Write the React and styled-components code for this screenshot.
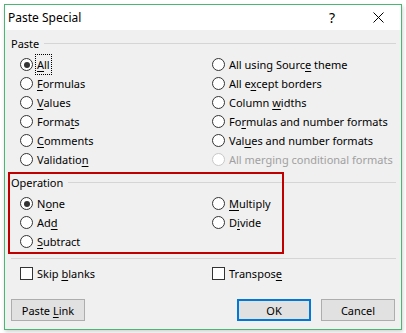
import React from 'react'
import styled, { createGlobalStyle } from 'styled-components'

const GlobalStyle = createGlobalStyle`
    html, body { margin: 0; padding: 0; background: #fff; }
    body {
        font-family: "Noto Sans", "DejaVu Sans", sans-serif;
        font-size: 11px;
        color: #000;
    }
`

// WINDOW
const Page = styled.div`
    padding: 4px;
`
const Window = styled.div`
    position: relative;
    box-sizing: border-box;
    width: 398px;
    height: 326px;
    border: 1px solid #4cb475;
    background: #f0f0f0;
    box-shadow: 1px 2px 4px rgba(0, 0, 0, .18);
    display: flex;
    flex-direction: column;
`
const TitleBar = styled.div`
    height: 25px;
    background: #fff;
    display: flex;
    align-items: center;
    padding-left: 3px;
`
const Title = styled.div`
    flex: 1;
    font-size: 12px;
`
const TitleButton = styled.div`
    width: 46px;
    height: 25px;
    display: flex;
    align-items: center;
    justify-content: center;
    font-size: 14px;
`
const Content = styled.div`
    flex: 1;
    display: flex;
    flex-direction: column;
    padding: 6px 5px 8px 6px;
`

// GROUPS
const GroupHeader = styled.div`
    height: 15px;
    display: flex;
    align-items: center;
    gap: 5px;
    margin-top: ${p => p.$top || 0}px;

    &::after {
        content: '';
        flex: 1;
        height: 1px;
        background: #d5d5d5;
    }
`
const OptionGrid = styled.div`
    display: grid;
    grid-template-columns: 192px 1fr;
    grid-auto-flow: column;
    grid-template-rows: repeat(${p => p.$rows}, 19px);
    padding-left: 9px;
    margin-top: 4px;
`
const Separator = styled.div`
    height: 1px;
    background: #d5d5d5;
    margin-top: 7px;
`
const CheckRow = styled.div`
    display: grid;
    grid-template-columns: 192px 1fr;
    height: 19px;
    padding-left: 9px;
    margin-top: 5px;
`
const Option = styled.label`
    display: flex;
    align-items: center;
    gap: 4px;
    white-space: nowrap;
    color: ${p => p.$disabled ? '#a0a0a0' : '#000'};
`
const Radio = styled.span`
    box-sizing: border-box;
    flex: none;
    width: 13px;
    height: 13px;
    border-radius: 50%;
    border: 1px solid ${p => p.$disabled ? '#c8c8c8' : '#333'};
    background: #fff;
    display: flex;
    align-items: center;
    justify-content: center;

    &::after {
        content: '';
        display: ${p => p.$checked ? 'block' : 'none'};
        width: 6px;
        height: 6px;
        border-radius: 50%;
        background: #333;
    }
`
const Box = styled.span`
    box-sizing: border-box;
    flex: none;
    width: 13px;
    height: 13px;
    border: 1px solid #333;
    background: #fff;
`
const Text = styled.span`
    outline: ${p => p.$focus ? '1px dotted #000' : 'none'};
    padding: ${p => p.$focus ? '2px 1px' : '0'};
    margin-left: ${p => p.$focus ? '-1px' : '0'};
`
const Key = styled.u`
    text-underline-offset: 2px;
`

// BUTTONS
const ButtonRow = styled.div`
    margin-top: auto;
    display: flex;
    gap: 10px;
    padding-right: 1px;
`
const Button = styled.div`
    box-sizing: border-box;
    width: 74px;
    height: 22px;
    display: flex;
    align-items: center;
    justify-content: center;
    background: #e1e1e1;
    border: ${p => p.$default ? '2px solid #0078d7' : '1px solid #adadad'};
    margin-left: ${p => p.$push ? 'auto' : '0'};
`

// ANNOTATION
const Highlight = styled.div`
    position: absolute;
    left: 3px;
    top: 167px;
    width: 276px;
    height: 82px;
    box-sizing: border-box;
    border: 2px solid #c00000;
    pointer-events: none;
`

const L = ({ text, k, focus }) => (
    <Text $focus={focus}>
        {k == null ? text : <>{text.slice(0, k)}<Key>{text[k]}</Key>{text.slice(k + 1)}</>}
    </Text>
)

const pasteOptions = [
    ['All', 0, true],
    ['Formulas', 0],
    ['Values', 0],
    ['Formats', 5],
    ['Comments', 0],
    ['Validation', 9],
    ['All using Source theme', 15],
    ['All except borders', 5],
    ['Column widths', 7],
    ['Formulas and number formats', 2],
    ['Values and number formats', 3],
    ['All merging conditional formats', null, false, true],
]

const opOptions = [
    ['None', 1, true],
    ['Add', 2],
    ['Subtract', 0],
    ['Multiply', 0],
    ['Divide', 1],
    null,
]

const CloseIcon = () => (
    <svg width="11" height="11" viewBox="0 0 11 11">
        <path d="M0.5 0.5 L10.5 10.5 M10.5 0.5 L0.5 10.5" stroke="#000" strokeWidth="1" />
    </svg>
)

export default function App() {
    return (
        <Page>
            <GlobalStyle />
            <Window>
                <TitleBar>
                    <Title>Paste Special</Title>
                    <TitleButton>?</TitleButton>
                    <TitleButton><CloseIcon /></TitleButton>
                </TitleBar>
                <Content>
                    <GroupHeader>Paste</GroupHeader>
                    <OptionGrid $rows={6}>
                        {pasteOptions.map(([text, k, checked, disabled]) => (
                            <Option key={text} $disabled={disabled}>
                                <Radio $checked={checked} $disabled={disabled} />
                                <L text={text} k={k} focus={text === 'All'} />
                            </Option>
                        ))}
                    </OptionGrid>
                    <GroupHeader $top={6}>Operation</GroupHeader>
                    <OptionGrid $rows={3}>
                        {opOptions.map((o, i) => o ? (
                            <Option key={o[0]}>
                                <Radio $checked={o[2]} />
                                <L text={o[0]} k={o[1]} />
                            </Option>
                        ) : <span key={i} />)}
                    </OptionGrid>
                    <Separator />
                    <CheckRow>
                        <Option><Box /><L text="Skip blanks" k={5} /></Option>
                        <Option><Box /><L text="Transpose" k={8} /></Option>
                    </CheckRow>
                    <ButtonRow>
                        <Button><L text="Paste Link" k={6} /></Button>
                        <Button $default $push>OK</Button>
                        <Button>Cancel</Button>
                    </ButtonRow>
                </Content>
                <Highlight />
            </Window>
        </Page>
    )
}
